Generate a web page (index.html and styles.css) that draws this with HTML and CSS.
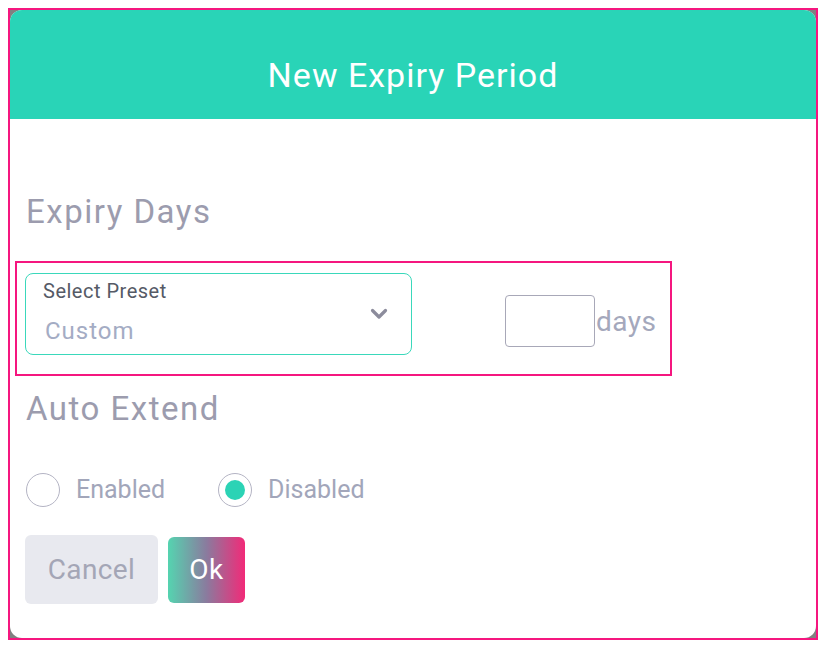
FILE: index.html
```html
<!DOCTYPE html>
<html lang="en">
<head>
  <meta charset="UTF-8" />
  <title>New Expiry Period</title>
  <meta name="viewport" content="width=device-width, initial-scale=1.0">
  <link rel="stylesheet" href="styles.css">
</head>
<body>

  <div class="frame">
    <div class="dialog">
      <div class="dialog-header">
        <h1>New Expiry Period</h1>
      </div>

      <div class="dialog-body">
        <h2 class="section-title first">Expiry Days</h2>

        <div class="expiry-row">
          <div class="preset-select">
            <span class="preset-label">Select Preset</span>
            <span class="preset-value">Custom</span>
            <svg class="chevron" width="18" height="12" viewBox="0 0 18 12">
              <path d="M2.5 2.5 L9 9 L15.5 2.5" fill="none" stroke="#8c8c9c" stroke-width="3.2" stroke-linecap="round" stroke-linejoin="round"/>
            </svg>
          </div>

          <div class="days-group">
            <input class="days-input" type="text" value="">
            <span class="days-unit">days</span>
          </div>
        </div>

        <h2 class="section-title">Auto Extend</h2>

        <div class="radio-row">
          <label class="radio">
            <span class="radio-circle"></span>
            <span class="radio-text">Enabled</span>
          </label>
          <label class="radio checked">
            <span class="radio-circle"></span>
            <span class="radio-text">Disabled</span>
          </label>
        </div>

        <div class="button-row">
          <button class="btn-cancel">Cancel</button>
          <button class="btn-ok">Ok</button>
        </div>
      </div>
    </div>
  </div>

</body>
</html>
```

FILE: styles.css
```css
* {
  box-sizing: border-box;
}
body {
  margin: 0;
  background: #fff;
  font-family: Roboto, "Liberation Sans", sans-serif;
}
.frame {
  margin: 8px;
  width: 810px;
  height: 632px;
  border: 2px solid #f5167f;
  background: #808080;
}
.dialog {
  height: 100%;
  background: #fff;
  border-radius: 12px;
  overflow: hidden;
}
.dialog-header {
  height: 109px;
  padding-top: 20px;
  background: #29d4b7;
  display: flex;
  align-items: center;
  justify-content: center;
}
.dialog-header h1 {
  margin: 0;
  font-size: 34px;
  font-weight: 400;
  letter-spacing: 1px;
  color: #fff;
  line-height: 40px;
}
.dialog-body {
  padding: 0 16px;
}
.section-title {
  margin: 13px 0 0;
  font-size: 33px;
  font-weight: 400;
  letter-spacing: 1.5px;
  line-height: 40px;
  color: #9c9cae;
}
.section-title.first {
  margin-top: 73px;
}
.expiry-row {
  margin: 29px 0 0 -11px;
  width: 657px;
  height: 115px;
  border: 2px solid #f5167f;
  padding: 10px 8px;
  display: flex;
  align-items: flex-start;
}
.preset-select {
  position: relative;
  width: 387px;
  height: 82px;
  border: 1.5px solid #3ad8bb;
  border-radius: 8px;
  padding: 0 17px;
}
.preset-label {
  display: block;
  margin-top: 4px;
  font-size: 20px;
  letter-spacing: 0.5px;
  line-height: 26px;
  color: #555a66;
}
.preset-value {
  display: block;
  margin-top: 13px;
  padding-left: 2px;
  font-size: 24px;
  letter-spacing: 1px;
  line-height: 28px;
  color: #a4acc4;
}
.chevron {
  position: absolute;
  right: 23px;
  top: 34px;
}
.days-group {
  margin: 22px 0 0 93px;
  display: flex;
  align-items: flex-end;
}
.days-input {
  width: 90px;
  height: 52px;
  border: 1.5px solid #a8a8b8;
  border-radius: 4px;
  outline: none;
}
.days-unit {
  margin-left: 1px;
  margin-bottom: 10px;
  font-size: 28px;
  letter-spacing: 0.5px;
  line-height: 30px;
  color: #a4a8bc;
}
.radio-row {
  margin-top: 44px;
  display: flex;
  align-items: center;
  gap: 53px;
}
.radio {
  display: flex;
  align-items: center;
  gap: 16px;
}
.radio-circle {
  width: 34px;
  height: 34px;
  border: 1.5px solid #b4b4c4;
  border-radius: 50%;
  display: flex;
  align-items: center;
  justify-content: center;
}
.radio.checked .radio-circle::after {
  content: "";
  width: 20px;
  height: 20px;
  border-radius: 50%;
  background: #2bd3b5;
}
.radio-text {
  font-size: 25px;
  line-height: 34px;
  color: #a2a6ba;
}
.button-row {
  margin-top: 28px;
  margin-left: -1px;
  display: flex;
  align-items: center;
  gap: 10px;
}
button {
  border: none;
  border-radius: 6px;
  font-family: Roboto, "Liberation Sans", sans-serif;
  font-size: 28px;
  letter-spacing: 0.4px;
  cursor: pointer;
}
.btn-cancel {
  width: 133px;
  height: 69px;
  background: #e8e9ef;
  color: #a4a6b6;
}
.btn-ok {
  width: 77px;
  height: 66px;
  background: linear-gradient(to right, #55d4b0, #8a7b9e 50%, #f22a78);
  color: #fff;
}
```
